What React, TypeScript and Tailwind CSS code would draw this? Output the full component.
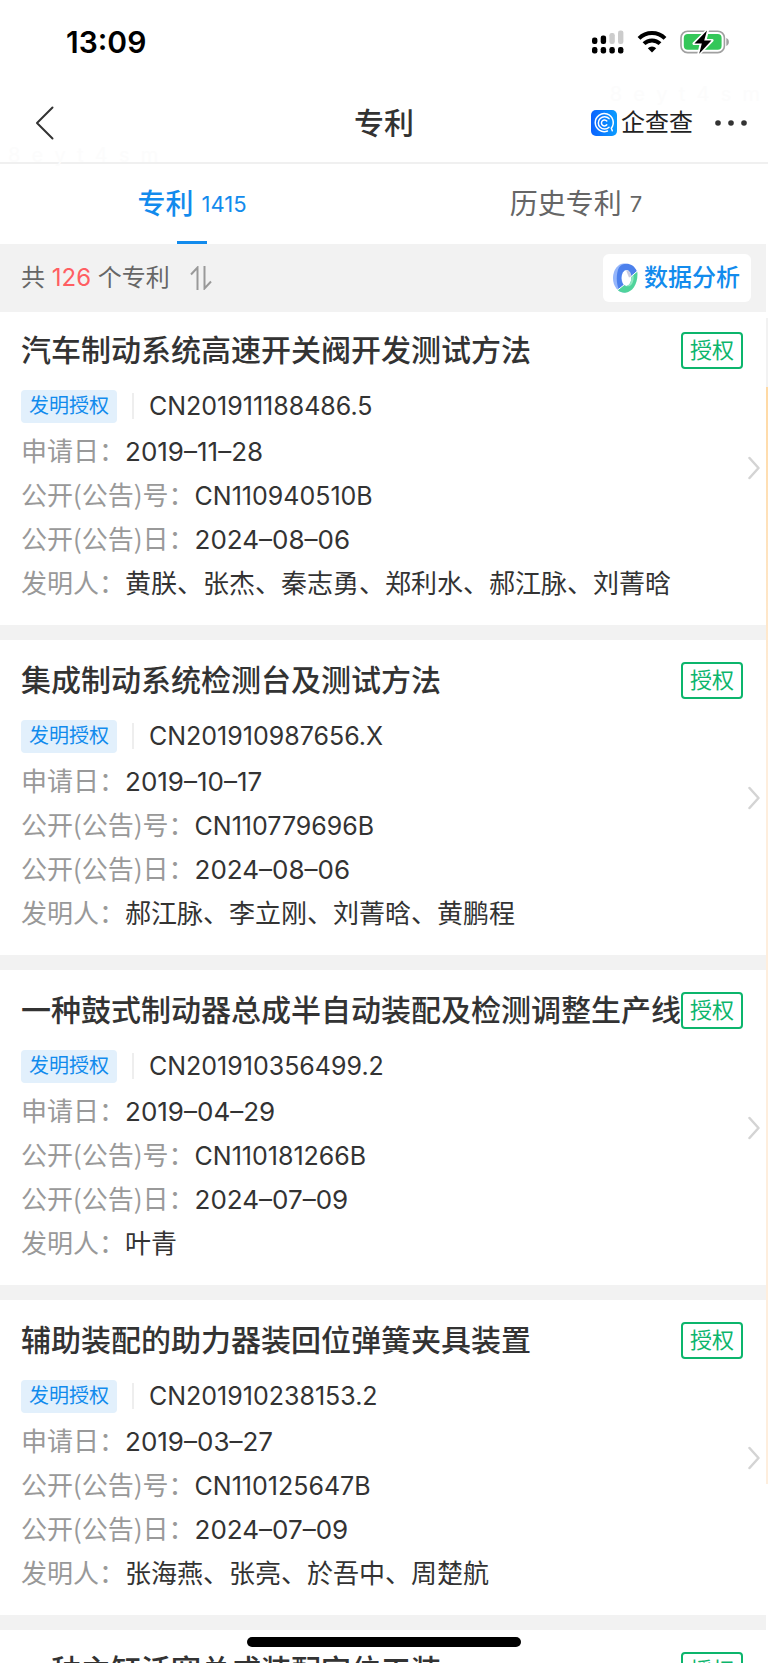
import React, { useState } from "react";

type TPatentDetails = {
  kind: string;
  applyNo: string;
  applyDate: string;
  publicNo: string;
  publicDate: string;
  inventors: string[];
};

type TPatent = {
  title: string;
  status: string;
  details?: TPatentDetails;
};

type TTab = {
  id: string;
  label: string;
  count: number;
};

const tabs: TTab[] = [
  { id: "current", label: "专利", count: 1415 },
  { id: "history", label: "历史专利", count: 7 },
];

const patents: TPatent[] = [
  {
    title: "汽车制动系统高速开关阀开发测试方法",
    status: "授权",
    details: {
      kind: "发明授权",
      applyNo: "CN201911188486.5",
      applyDate: "2019–11–28",
      publicNo: "CN110940510B",
      publicDate: "2024–08–06",
      inventors: ["黄朕", "张杰", "秦志勇", "郑利水", "郝江脉", "刘菁晗"],
    },
  },
  {
    title: "集成制动系统检测台及测试方法",
    status: "授权",
    details: {
      kind: "发明授权",
      applyNo: "CN201910987656.X",
      applyDate: "2019–10–17",
      publicNo: "CN110779696B",
      publicDate: "2024–08–06",
      inventors: ["郝江脉", "李立刚", "刘菁晗", "黄鹏程"],
    },
  },
  {
    title: "一种鼓式制动器总成半自动装配及检测调整生产线",
    status: "授权",
    details: {
      kind: "发明授权",
      applyNo: "CN201910356499.2",
      applyDate: "2019–04–29",
      publicNo: "CN110181266B",
      publicDate: "2024–07–09",
      inventors: ["叶青"],
    },
  },
  {
    title: "辅助装配的助力器装回位弹簧夹具装置",
    status: "授权",
    details: {
      kind: "发明授权",
      applyNo: "CN201910238153.2",
      applyDate: "2019–03–27",
      publicNo: "CN110125647B",
      publicDate: "2024–07–09",
      inventors: ["张海燕", "张亮", "於吾中", "周楚航"],
    },
  },
  {
    title: "一种主缸活塞总成装配定位工装",
    status: "授权",
  },
];

function StatusBar() {
  return (
    <div className="flex h-[84px] shrink-0 items-center justify-between pr-[38px] pl-[66px] text-black">
      <span className="text-[30px] font-semibold">13:09</span>
      <div className="flex items-center gap-[13px]">
        <svg width="33" height="24" viewBox="0 0 33 24">
          <rect x="1" y="7.5" width="5.4" height="6.5" rx="2.2" />
          <rect x="9.7" y="5.5" width="5.4" height="8.5" rx="2.2" />
          <rect x="18.4" y="3" width="5.4" height="11" rx="2.2" fill="#ccc" />
          <rect x="27" y="0.5" width="5.4" height="13.5" rx="2.2" fill="#ccc" />
          <rect x="1" y="17" width="5.4" height="6.4" rx="2.2" />
          <rect x="9.7" y="17" width="5.4" height="6.4" rx="2.2" />
          <rect x="18.4" y="17" width="5.4" height="6.4" rx="2.2" />
          <rect x="27" y="17" width="5.4" height="6.4" rx="2.2" />
        </svg>
        <svg width="30" height="24" viewBox="0 0 30 24" fill="none" stroke="#000" strokeWidth="4">
          <path d="M2 8.4a18.6 18.6 0 0 1 26 0" />
          <path d="M7 13.7a11.4 11.4 0 0 1 16 0" />
          <path d="M15 22.6l-4.2-4.3a6 6 0 0 1 8.4 0z" fill="#000" stroke="none" />
        </svg>
        <svg width="50" height="24" viewBox="0 0 50 24">
          <rect x="1" y="1.2" width="43.4" height="21.4" rx="6.6" fill="#fff" stroke="#a0a0a0" strokeWidth="1.6" />
          <rect x="3.8" y="4" width="37.8" height="15.8" rx="4" fill="#34c759" />
          <path d="M46.3 8v8c1.8-.8 2.6-2.2 2.6-4s-.8-3.2-2.6-4z" fill="#a0a0a0" />
          <path d="M27.6 0L14 13.6h7.2L18.8 24 32 10.4h-7z" stroke="#fff" strokeWidth="3" strokeLinejoin="round" />
          <path d="M27 0.6L14.4 13.6h7.4L19.2 23.8 31.4 10.6h-7.2z" />
        </svg>
      </div>
    </div>
  );
}

function BrandLogo() {
  return (
    <svg width="26" height="26" viewBox="0 0 26 26" fill="none">
      <defs>
        <linearGradient id="brand" x1="0" y1="0" x2="1" y2="0">
          <stop offset="0" stopColor="#0a62ff" />
          <stop offset="1" stopColor="#0a9dff" />
        </linearGradient>
      </defs>
      <rect width="26" height="26" rx="5" fill="url(#brand)" />
      <g stroke="#fff" strokeWidth="1.5" strokeLinecap="round">
        <path d="M16.5 21A9 9 0 1 1 20.3 18.2L21.3 20.8" />
        <path d="M18 8.6a6.2 6.2 0 1 0 0 8.6" />
        <path d="M15.8 11a3 3 0 1 0 0 3.8" />
      </g>
    </svg>
  );
}

function NavBar() {
  return (
    <header className="grid h-20 shrink-0 grid-cols-[1fr_auto_1fr] items-center border-b-2 border-[#f0f0f0] px-5 text-[#333]">
      <button aria-label="返回" className="justify-self-start pl-3.5">
        <svg width="22" height="34" viewBox="0 0 22 34" fill="none" stroke="#333" strokeWidth="2" strokeLinecap="round" strokeLinejoin="round">
          <path d="M18.5 1.5L3 17l15.5 15.5" />
        </svg>
      </button>
      <h1 className="text-[30px] leading-9 font-medium">专利</h1>
      <div className="flex items-center gap-[21px] justify-self-end">
        <a href="#brand" className="flex items-center gap-1 text-2xl leading-8 text-[#222]">
          <BrandLogo />
          企查查
        </a>
        <button aria-label="更多">
          <svg width="34" height="8" viewBox="0 0 34 8" fill="#333">
            <circle cx="4" cy="4" r="2.8" />
            <circle cx="17" cy="4" r="2.8" />
            <circle cx="30" cy="4" r="2.8" />
          </svg>
        </button>
      </div>
    </header>
  );
}

function Tabs() {
  const [active, setActive] = useState<string>("current");

  return (
    <nav className="grid h-20 shrink-0 grid-cols-2">
      {tabs.map((tab) => (
        <button
          key={tab.id}
          onClick={() => setActive(tab.id)}
          className={`relative flex items-center justify-center gap-2 text-[28px] ${
            active === tab.id ? "font-medium text-[#128bed]" : "text-[#666]"
          }`}
        >
          {tab.label}
          <span className="text-[22px] font-normal">{tab.count}</span>
          {active === tab.id && <span className="absolute bottom-0 h-[3px] w-[30px] bg-[#128bed]" />}
        </button>
      ))}
    </nav>
  );
}

function Toolbar() {
  return (
    <div className="mr-0.5 flex h-[68px] shrink-0 items-center justify-between bg-[#f2f2f2] pr-[15px] pl-[21px]">
      <div className="flex items-center gap-5 text-2xl text-[#666]">
        <span>
          共 <span className="text-[#ff5e62]">126</span> 个专利
        </span>
        <button aria-label="排序">
          <svg width="22" height="24" viewBox="0 0 22 24" fill="none" stroke="#999" strokeWidth="2">
            <path d="M1 8.5L7.5 1.5V24" />
            <path d="M14.5 0v22.5L21 15.5" />
          </svg>
        </button>
      </div>
      <button className="flex h-12 items-center gap-1.5 rounded-md bg-white pr-[11px] pl-2.5 text-2xl font-medium text-[#128bed]">
        <svg width="25" height="30" viewBox="0 0 25 30">
          <ellipse cx="11" cy="15" rx="11" ry="14.5" fill="#95b6fb" />
          <path d="M6 4.5C9-.5 20-1.5 24 8.5L17 13.5C16 5 9 7 8.5 14 8 19 10 21 11 22L6 26.5C3 21 3 10 6 4.5z" fill="#4c80ec" />
          <ellipse cx="13.5" cy="15" rx="4.8" ry="8" fill="#fff" />
          <path d="M13 7.2c3 0 5 3 5.2 6.3L16 14.5z" fill="#c9cbe0" />
          <path d="M24.3 8.5C25.5 20 20 29.5 12 29.7 9 29.7 7 29 4.5 26.8L11 22c4 3 8-2 7.5-9z" fill="#4fd39b" />
          <path d="M11 22.2c4 2.5 7.6-2 7.5-8.7l2-1.5c1 8-3 14-9.5 10.2z" fill="#8fe8c0" />
          <path d="M25 7.5L17.8 13.8M11.5 21.5L4 27.5" stroke="#fff" strokeWidth="1" />
        </svg>
        数据分析
      </button>
    </div>
  );
}

function Field({ label, children }: { label: string; children: React.ReactNode }) {
  return (
    <div className="flex h-11 items-baseline">
      <dt className="shrink-0 font-['Noto_Sans_CJK_SC',sans-serif] text-[#999]">{label}：</dt>
      <dd>{children}</dd>
    </div>
  );
}

function PatentDetails({ details }: { details: TPatentDetails }) {
  return (
    <dl className="mt-[15px] text-[26px] leading-[44px]">
      <div className="flex h-11 items-center">
        <dt className="rounded-sm bg-[#e2f0fc] px-2 text-xl leading-[33px] text-[#128bed]">{details.kind}</dt>
        <dd className="ml-[15px] flex items-center gap-[15px] text-[25px]">
          <span className="h-[26px] w-0.5 bg-[#eee]" />
          {details.applyNo}
        </dd>
      </div>
      <Field label="申请日">{details.applyDate}</Field>
      <Field label="公开(公告)号">
        <span className="text-[25px]">{details.publicNo}</span>
      </Field>
      <Field label="公开(公告)日">{details.publicDate}</Field>
      <Field label="发明人">{details.inventors.join("、")}</Field>
    </dl>
  );
}

function PatentCard({ patent }: { patent: TPatent }) {
  return (
    <li className="flex shrink-0 items-center bg-white pt-[21px] pr-1.5 pb-[21px] pl-[21px] first:pt-[19px]">
      <div className="min-w-0 flex-1">
        <div className="flex h-[38px] items-center justify-between">
          <h2 className="text-[30px] leading-9 font-medium whitespace-nowrap">{patent.title}</h2>
          <span className="shrink-0 rounded-sm border-2 border-[#0cb56c] px-[7px] text-[22px] leading-[33px] text-[#0cb56c]">
            {patent.status}
          </span>
        </div>
        {patent.details && <PatentDetails details={patent.details} />}
      </div>
      <svg className="ml-[5px] shrink-0" width="12" height="24" viewBox="0 0 12 24" fill="none" stroke="#d4d4d4" strokeWidth="2.5" strokeLinecap="round" strokeLinejoin="round">
        {patent.details && <path d="M1.5 2L10.5 12l-9 10" />}
      </svg>
    </li>
  );
}

export default function App() {
  return (
    <div className="relative flex h-screen w-full flex-col overflow-hidden bg-white font-['Inter','Noto_Sans_CJK_SC',sans-serif] text-[#333]">
      <StatusBar />
      <NavBar />
      <Tabs />
      <Toolbar />
      <ul className="mr-0.5 flex min-h-0 flex-1 flex-col gap-[15px] overflow-hidden bg-[#f2f2f2]">
        {patents.map((patent) => (
          <PatentCard key={patent.title} patent={patent} />
        ))}
      </ul>
      <div className="absolute top-[318px] right-0 flex h-[1166px] w-0.5 flex-col">
        <div className="h-[69px] bg-[#f2f2f2]" />
        <div className="h-[350px] bg-linear-to-b from-[#ffd9a3] to-[#feeedd]" />
        <div className="flex-1 bg-[#feeedd]" />
      </div>
      <span className="absolute top-20 right-2 text-xl whitespace-pre text-[#fcfcfc]">8  e  y  t  4  s  m</span>
      <span className="absolute top-[141px] left-2 text-xl whitespace-pre text-[#fcfcfc]">8  e  y  t  4  s  m</span>
      <div className="absolute inset-x-0 bottom-4 mx-auto h-2.5 w-[274px] rounded-full bg-black" />
    </div>
  );
}
